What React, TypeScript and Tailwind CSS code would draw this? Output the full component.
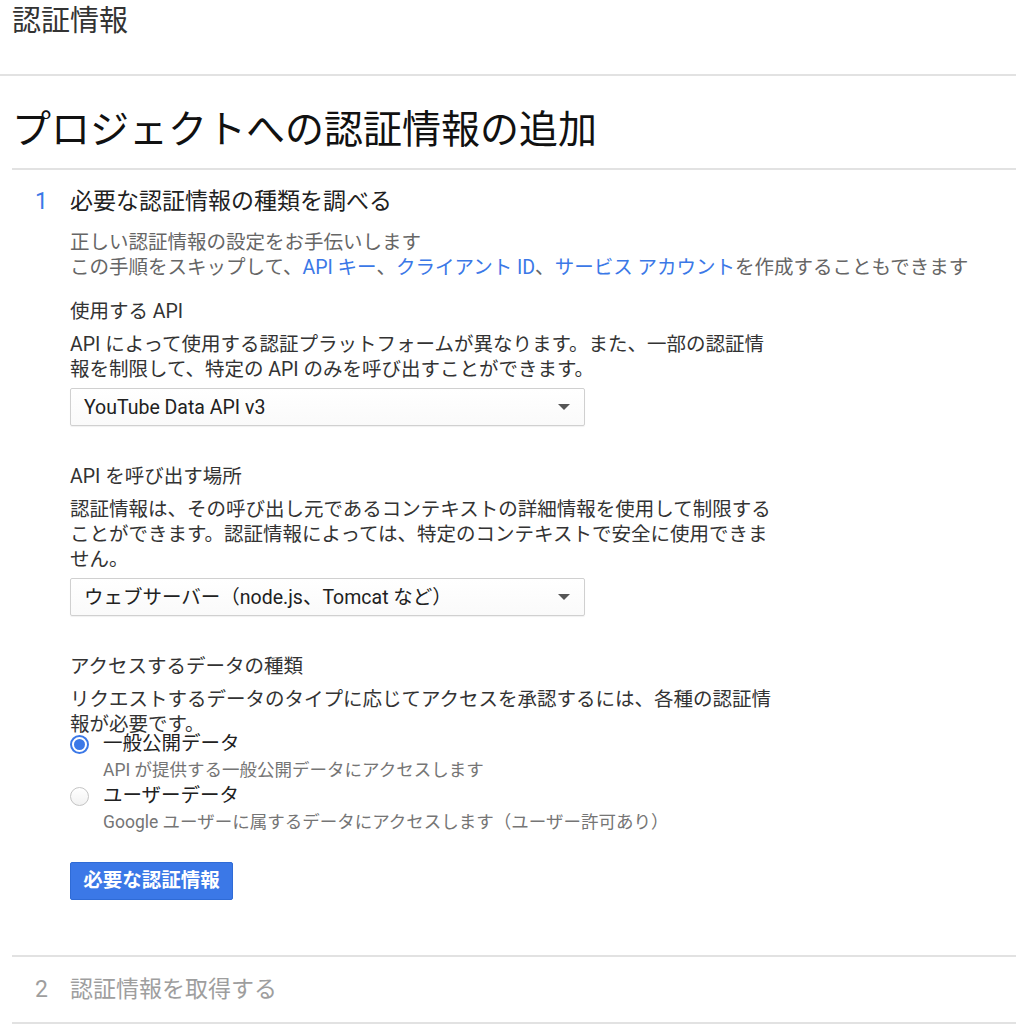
import React from "react";

const FONT = 'Roboto, "Noto Sans CJK JP", "Noto Sans", sans-serif';

function Select({ value }: { value: string }) {
  return (
    <div className="mt-[6px] flex h-[38px] w-[515px] items-center justify-between rounded-[2px] border border-[#d0d0d0] bg-gradient-to-b from-white to-[#fafafa] pl-[13px] pr-[13px] shadow-[0_1px_1px_rgba(0,0,0,0.06)]">
      <span className="text-[19.5px] leading-[25px] text-[#212121]">{value}</span>
      <svg width="12" height="6" viewBox="0 0 12 6" className="mr-[1px]">
        <path d="M0 0 L12 0 L6 6 Z" fill="#555" />
      </svg>
    </div>
  );
}

function Radio({ checked, label, hint }: { checked: boolean; label: string; hint: string }) {
  return (
    <div>
      <div className="flex items-center">
        {checked ? (
          <span className="flex h-[19px] w-[19px] items-center justify-center rounded-full border-2 border-[#3b78e7] bg-white">
            <span className="h-[11px] w-[11px] rounded-full bg-[#3b78e7]" />
          </span>
        ) : (
          <span className="h-[19px] w-[19px] rounded-full border border-[#c4c4c4] bg-gradient-to-b from-white to-[#f2f2f2]" />
        )}
        <span className="ml-[14px] text-[19.5px] leading-[26px] text-[#212121]">{label}</span>
      </div>
      <div className="pl-[33px] text-[17.5px] leading-[26px] text-[#757575]">{hint}</div>
    </div>
  );
}

export default function App() {
  return (
    <div className="min-h-[1024px] w-[1016px] bg-white" style={{ fontFamily: FONT }}>
      <div className="h-[74px] px-3">
        <div className="text-[29px] leading-[42px] text-[#333]">認証情報</div>
      </div>
      <div className="border-t-2 border-[#e2e2e2]" />

      <div className="pl-3">
        <h1 className="mt-[30px] text-[39px] leading-[48px] text-[#111]">プロジェクトへの認証情報の追加</h1>
        <div className="mt-[14px] border-t-2 border-[#e2e2e2]" />

        {/* Step 1 */}
        <div className="mt-[17px] flex text-[23px] leading-[30px]">
          <span className="w-[58px] pl-[23px] text-[#3b78e7]">1</span>
          <span className="text-[#212121]">必要な認証情報の種類を調べる</span>
        </div>

        <div className="pl-[58px]">
          <div className="mt-[13px] text-[19.5px] leading-[25px] text-[#666]">
            <div>正しい認証情報の設定をお手伝いします</div>
            <div>
              この手順をスキップして、<span className="text-[#3b78e7]">API キー</span>、
              <span className="text-[#3b78e7]">クライアント ID</span>、
              <span className="text-[#3b78e7]">サービス アカウント</span>を作成することもできます
            </div>
          </div>

          <div className="mt-[19px] text-[19.5px] leading-[25px] text-[#333]">使用する API</div>
          <p className="mt-[8px] w-[706px] text-[19.5px] leading-[25px] text-[#333]">
            API によって使用する認証プラットフォームが異なります。また、一部の認証情報を制限して、特定の API のみを呼び出すことができます。
          </p>
          <Select value="YouTube Data API v3" />

          <div className="mt-[38px] text-[19.5px] leading-[25px] text-[#333]">API を呼び出す場所</div>
          <p className="mt-[8px] w-[706px] text-[19.5px] leading-[25px] text-[#333]">
            認証情報は、その呼び出し元であるコンテキストの詳細情報を使用して制限することができます。認証情報によっては、特定のコンテキストで安全に使用できません。
          </p>
          <Select value="ウェブサーバー（node.js、Tomcat など）" />

          <div className="mt-[38px] text-[19.5px] leading-[25px] text-[#333]">アクセスするデータの種類</div>
          <p className="mt-[8px] w-[706px] text-[19.5px] leading-[25px] text-[#333]">
            リクエストするデータのタイプに応じてアクセスを承認するには、各種の認証情報が必要です。
          </p>
          <div className="-mt-[6px]">
            <Radio checked label="一般公開データ" hint="API が提供する一般公開データにアクセスします" />
            <Radio checked={false} label="ユーザーデータ" hint="Google ユーザーに属するデータにアクセスします（ユーザー許可あり）" />
          </div>

          <button className="mt-[27px] h-[38px] w-[163px] rounded-[2px] border border-[#2f6bd6] bg-[#3b78e7] text-[19.5px] font-semibold text-white">
            必要な認証情報
          </button>
        </div>

        <div className="mt-[55px] border-t-2 border-[#e2e2e2]" />

        {/* Step 2 */}
        <div className="mt-[18px] flex text-[23px] leading-[30px] text-[#9e9e9e]">
          <span className="w-[58px] pl-[23px]">2</span>
          <span>認証情報を取得する</span>
        </div>
        <div className="mt-[17px] border-t-2 border-[#e2e2e2]" />
      </div>
    </div>
  );
}
